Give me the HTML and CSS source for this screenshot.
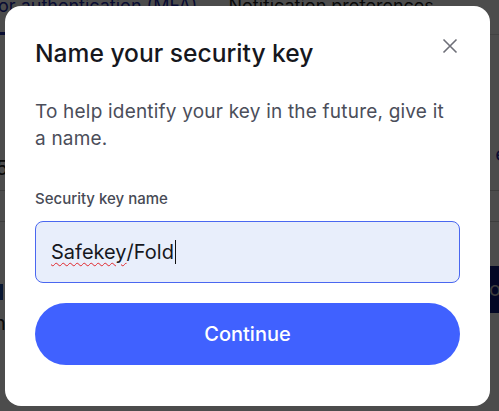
FILE: index.html
```html
<!DOCTYPE html>
<html lang="en">
<head>
<meta charset="utf-8">
<title>Name your security key</title>
<link rel="stylesheet" href="styles.css">
</head>
<body>
<div class="page">
  <div class="tabs">
    <span class="tab active">or authentication (MFA)</span>
    <span class="tab">Notification preferences</span>
  </div>
  <div class="rows">
    <div class="row r1"><span>5</span><span class="link">e</span></div>
    <div class="row r2"></div>
    <div class="row r3"><span class="mark"></span><span class="dark">o</span></div>
    <div class="row r4"><span>n</span></div>
  </div>
</div>
<div class="overlay"></div>
<div class="modal" role="dialog" aria-labelledby="t">
  <button class="close" aria-label="Close">
    <svg width="16" height="16" viewBox="0 0 16 16"><path d="M1.5 1.5L14.5 14.5M14.5 1.5L1.5 14.5" stroke="#6e6f78" stroke-width="1.6" fill="none"/></svg>
  </button>
  <h2 id="t" class="title">Name your security key</h2>
  <p class="desc">To help identify your key in the future, give it a name.</p>
  <label class="label" for="k">Security key name</label>
  <div class="input"><span class="typed">Safekey</span>/Fold<span class="caret"></span></div>
  <button class="continue">Continue</button>
</div>
</body>
</html>
```
FILE: styles.css
```css
* { box-sizing: border-box; }
html, body { margin: 0; padding: 0; }
body {
  width: 499px;
  height: 411px;
  overflow: hidden;
  background: #fff;
  font-family: Inter, "Noto Sans", sans-serif;
}
.page { position: relative; }
.tabs {
  display: flex;
  gap: 31px;
  margin-top: -7px;
  height: 42px;
  border-bottom: 1px solid #ddd;
  font-size: 18px;
  line-height: 26px;
  color: #1f1f1f;
}
.tab.active {
  margin-left: -2px;
  color: #1c2aa8;
  border-bottom: 3px solid #1c2aa8;
  height: 42px;
}
.rows { font-size: 20px; color: #222; }
.row { display: flex; justify-content: space-between; align-items: center; }
.r1 { height: 56px; margin-top: 100px; border-bottom: 1px solid #ccc; }
.r1 .link { color: #1c2aa8; margin-right: -8px; margin-top: -18px; }
.r1 > span:first-child { margin-left: -4px; margin-top: 10px; }
.r2 { height: 31px; border-bottom: 1px solid #ccc; }
.r3 { height: 47px; margin-top: 44px; }
.r3 .mark { width: 3px; height: 16px; background: #1c4aa8; margin-top: 4px; }
.r3 .dark { background: #0a1a7a; color: #ccc; width: 14px; height: 47px; line-height: 47px; padding-left: 4px; }
.r4 { height: 20px; margin-left: -6px; }
.overlay {
  position: fixed;
  inset: 0;
  background: rgba(0, 0, 0, 0.7);
}
.modal {
  position: fixed;
  left: 5px;
  top: 6px;
  width: 485px;
  height: 400px;
  background: #fff;
  border-radius: 16px;
  padding: 30px 30px 0 30px;
  display: flex;
  flex-direction: column;
}
.close {
  position: absolute;
  right: 32px;
  top: 32px;
  width: 16px;
  height: 16px;
  padding: 0;
  border: 0;
  background: none;
  display: flex;
}
.title {
  margin: 0;
  font-size: 24.6px;
  line-height: 34px;
  font-weight: 500;
  color: #16171d;
}
.desc {
  margin: 28px 0 0 0;
  font-size: 19px;
  line-height: 27px;
  font-weight: 400;
  letter-spacing: 0.2px;
  color: #4b4e5a;
}
.label {
  margin-top: 37px;
  font-size: 15px;
  line-height: 20px;
  font-weight: 500;
  color: #474a55;
}
.input {
  margin-top: 12px;
  height: 62px;
  border: 1px solid #4a67f0;
  border-radius: 8px;
  background: #e8eefb;
  padding: 0 15px;
  display: flex;
  align-items: center;
  font-size: 20px;
  color: #16171d;
}
.typed {
  text-decoration: underline wavy #e0262b;
  text-decoration-thickness: 1px;
  text-underline-offset: 3px;
}
.caret {
  display: inline-block;
  width: 1px;
  height: 24px;
  background: #111;
  margin-left: 1px;
}
.continue {
  margin-top: 20px;
  height: 62px;
  border: 0;
  border-radius: 31px;
  background: #4061ff;
  color: #fff;
  font-family: Inter, "Noto Sans", sans-serif;
  font-size: 20px;
  font-weight: 500;
}
```
